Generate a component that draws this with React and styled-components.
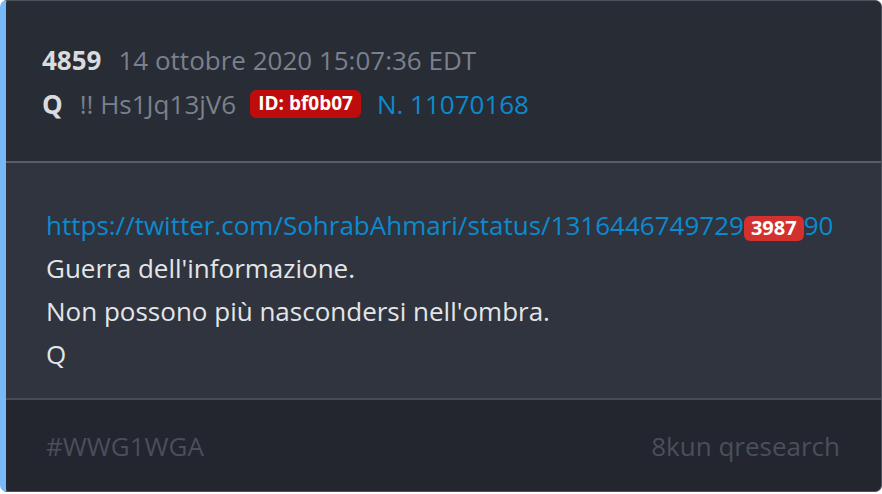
import React from "react";
import styled, { createGlobalStyle } from "styled-components";

const GlobalStyle = createGlobalStyle`
  html, body {
    margin: 0;
    padding: 0;
    background: #ffffff;
  }
  body {
    font-family: "Open Sans", "Noto Sans", sans-serif;
  }
`;

const Card = styled.div`
  width: 882px;
  height: 492px;
  box-sizing: border-box;
  display: flex;
  flex-direction: column;
  border: 1px solid #4d525c;
  border-left: 6px solid #79b8f7;
  border-radius: 7px;
  overflow: hidden;
  background: #2f343e;
`;

const Header = styled.div`
  background: #282c34;
  padding: 37px 36px 35px;
  border-bottom: 2px solid #585d67;
  font-size: 26px;
  line-height: 44px;
`;

const MetaRow = styled.div`
  display: flex;
  align-items: center;
  gap: 14px;
  height: 44px;
  white-space: nowrap;
`;

const Strong = styled.span`
  font-weight: 700;
  color: #d9dbde;
  margin-right: 3px;
`;

const Muted = styled.span`
  color: #7b808d;
`;

const Badge = styled.span`
  display: inline-flex;
  align-items: center;
  background: ${(p) => p.$bg || "#be0c0c"};
  color: #ffffff;
  font-weight: 700;
  font-size: ${(p) => p.$size || "19px"};
  line-height: 1;
  padding: ${(p) => p.$pad || "4px 8px 5px"};
  margin-right: ${(p) => p.$after || "2px"};
  border-radius: 6px;
`;

const PostLink = styled.a`
  color: #0b8ad0;
  text-decoration: none;
`;

const Body = styled.div`
  flex: 1;
  padding: 41px 40px 0;
  font-size: 26px;
  line-height: 43px;
  color: #e3e5e8;
  border-bottom: 2px solid #474c56;
`;

const Line = styled.div`
  white-space: nowrap;
`;

const Footer = styled.div`
  height: 91px;
  background: #23262e;
  display: flex;
  align-items: center;
  justify-content: space-between;
  padding: 0 41px 0 40px;
  font-size: 26px;
  color: #4a4f5b;
`;

export default function App() {
  return (
    <>
      <GlobalStyle />
      <Card>
        <Header>
          <MetaRow>
            <Strong>4859</Strong>
            <Muted>14 ottobre 2020 15:07:36 EDT</Muted>
          </MetaRow>
          <MetaRow>
            <Strong>Q</Strong>
            <Muted>!! Hs1Jq13jV6</Muted>
            <Badge>ID: bf0b07</Badge>
            <PostLink href="#">N. 11070168</PostLink>
          </MetaRow>
        </Header>
        <Body>
          <Line>
            <PostLink href="#">
              https://twitter.com/SohrabAhmari/status/1316446749729
              <Badge $bg="#d2312f" $size="20px" $pad="2px 7px 3px" $after="0">3987</Badge>
              90
            </PostLink>
          </Line>
          <Line>Guerra dell'informazione.</Line>
          <Line>Non possono più nascondersi nell'ombra.</Line>
          <Line>Q</Line>
        </Body>
        <Footer>
          <span>#WWG1WGA</span>
          <span>8kun qresearch</span>
        </Footer>
      </Card>
    </>
  );
}
